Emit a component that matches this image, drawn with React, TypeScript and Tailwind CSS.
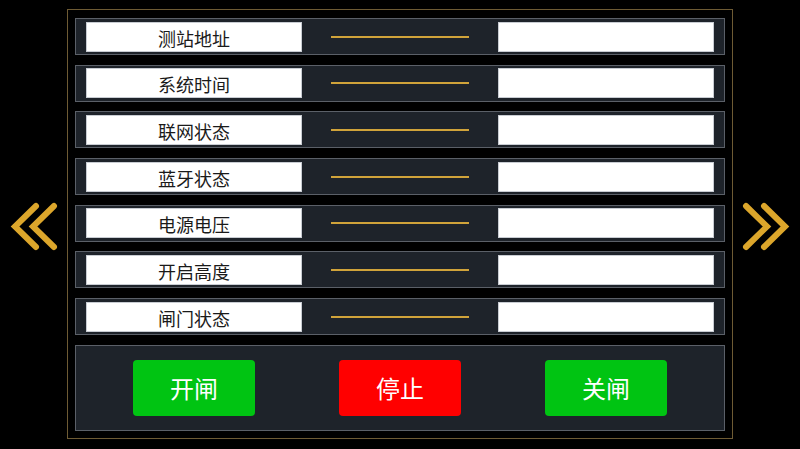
import React from "react";

const rows = ["测站地址", "系统时间", "联网状态", "蓝牙状态", "电源电压", "开启高度", "闸门状态"];

function Chevrons({ dir }: { dir: "left" | "right" }) {
  const pts =
    dir === "left"
      ? ["36,206 15,226.5 36,247", "54,206 33,226.5 54,247"]
      : ["4,206 25,226.5 4,247", "22,206 43,226.5 22,247"];
  return (
    <svg width="58" height="449" viewBox="0 0 58 449" className="block">
      {pts.map((p, i) => (
        <polyline
          key={i}
          points={p}
          fill="none"
          stroke="#dca62b"
          strokeWidth="6"
          strokeLinecap="round"
          strokeLinejoin="miter"
        />
      ))}
    </svg>
  );
}

export default function App() {
  return (
    <div
      className="w-[800px] h-[449px] bg-black flex items-start overflow-hidden"
      style={{ fontFamily: '"Noto Sans CJK SC", "Noto Sans", sans-serif' }}
    >
      <div className="w-[67px] h-full flex justify-start">
        <Chevrons dir="left" />
      </div>
      <div className="mt-[9px] w-[666px] h-[430px] border border-[#6e5b34] pt-[8px] px-[7px] flex flex-col gap-[9.7px]">
        {rows.map((r) => (
          <div
            key={r}
            className="h-[37px] shrink-0 border border-[#5b6068] bg-[#1e232a] flex items-center justify-between px-[10px]"
          >
            <div className="w-[216px] h-[30px] bg-white border border-[#c8ccd2] flex items-center justify-center pt-[2px] text-[18px] text-[#1a1a1a] leading-none">
              {r}
            </div>
            <div className="w-[138px] h-[2px] bg-[#d0a33a]" />
            <div className="w-[216px] h-[30px] bg-white border border-[#c8ccd2]" />
          </div>
        ))}
        <div className="h-[86px] shrink-0 border border-[#5b6068] bg-[#1e232a] flex items-center justify-between px-[57px]">
          <div className="w-[122px] h-[56px] rounded-[4px] bg-[#00c412] flex items-center justify-center text-white text-[24px] leading-none">
            开闸
          </div>
          <div className="w-[122px] h-[56px] rounded-[4px] bg-[#ff0000] flex items-center justify-center text-white text-[24px] leading-none">
            停止
          </div>
          <div className="w-[122px] h-[56px] rounded-[4px] bg-[#00c412] flex items-center justify-center text-white text-[24px] leading-none">
            关闸
          </div>
        </div>
      </div>
      <div className="w-[67px] h-full flex justify-end">
        <Chevrons dir="right" />
      </div>
    </div>
  );
}
